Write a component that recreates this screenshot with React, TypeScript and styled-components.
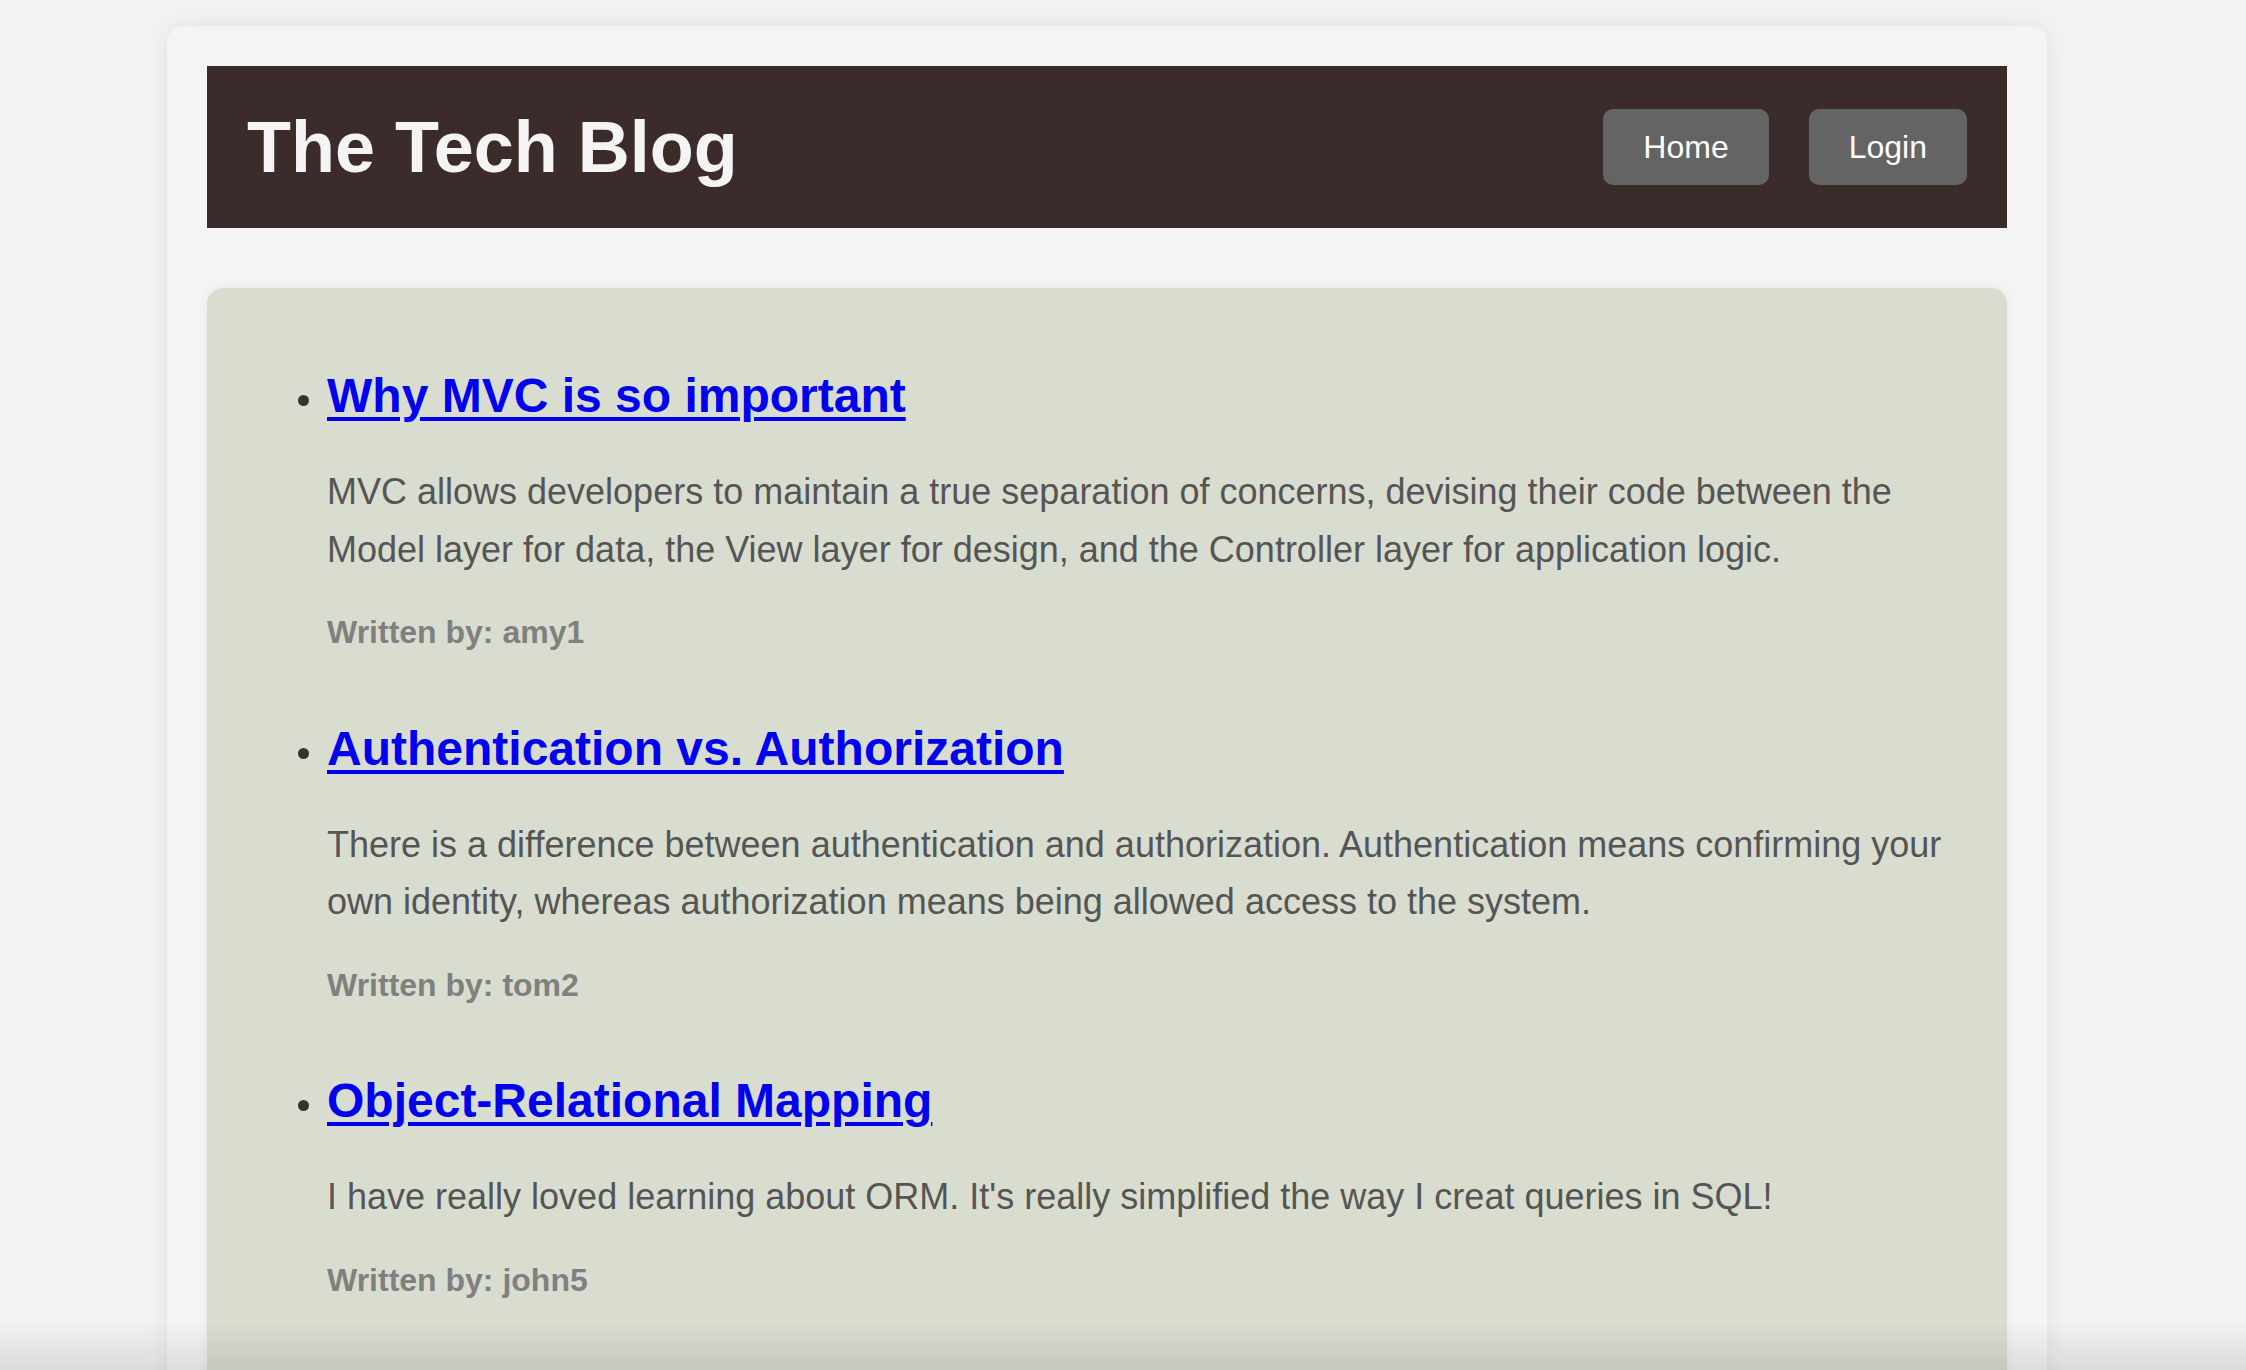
import React from "react";
import styled, { createGlobalStyle } from "styled-components";

const GlobalStyle = createGlobalStyle`
  html, body {
    margin: 0;
    padding: 0;
    background: #f2f2f2;
    font-family: "Liberation Sans", Arial, Helvetica, sans-serif;
    overflow: hidden;
  }
  #root { min-height: 1370px; }
`;

const Page = styled.div`
  padding: 26px 0 0 167px;
`;

const Container = styled.main`
  width: 1880px;
  box-sizing: border-box;
  padding: 40px;
  background: #f4f4f4;
  border-radius: 16px;
  box-shadow: 0 0 22px rgba(0, 0, 0, 0.07);
`;

const Header = styled.header`
  display: flex;
  align-items: center;
  justify-content: space-between;
  padding: 40px;
  background: #3b2c2b;
`;

const Title = styled.h1`
  margin: 0;
  font-size: 72px;
  font-weight: 700;
  line-height: 82px;
  color: #f4f4f4;
`;

const Nav = styled.nav`
  display: flex;
  gap: 40px;
`;

const NavButton = styled.a`
  display: block;
  padding: 20px 40px;
  font-size: 32px;
  line-height: 1.15;
  color: #ffffff;
  background: #646464;
  border-radius: 10px;
  text-decoration: none;
  cursor: pointer;
`;

const Card = styled.section`
  margin-top: 60px;
  padding: 80px 40px 200px;
  background: #d9ddd0;
  border-radius: 16px;
  box-shadow: 0 0 12px rgba(0, 0, 0, 0.05);
`;

const PostList = styled.ul`
  margin: 0;
  padding-left: 80px;
  list-style: disc;
  color: #333333;
  font-size: 36px;
`;

const PostItem = styled.li`
  margin-bottom: 62px;
`;

const PostTitle = styled.h2`
  margin: 0 0 40px;
  font-size: 48px;
  line-height: 1.15;
  font-weight: 700;

  a {
    color: #0000ee;
    text-decoration: underline;
    text-decoration-thickness: 4px;
    text-underline-offset: 5px;
  }
`;

const PostBody = styled.p`
  margin: 0 0 29px;
  font-size: 36px;
  line-height: 1.6;
  color: #555555;
`;

const Author = styled.p`
  margin: 0;
  font-size: 32px;
  line-height: 1.6;
  font-weight: 700;
  color: #808080;
`;

const BottomShade = styled.div`
  position: fixed;
  left: 0;
  right: 0;
  bottom: 0;
  height: 48px;
  pointer-events: none;
  background: linear-gradient(to bottom, rgba(0, 0, 0, 0), rgba(0, 0, 0, 0.09));
`;

const posts = [
  {
    title: "Why MVC is so important",
    body:
      "MVC allows developers to maintain a true separation of concerns, devising their code between the Model layer for data, the View layer for design, and the Controller layer for application logic.",
    author: "amy1",
  },
  {
    title: "Authentication vs. Authorization",
    body:
      "There is a difference between authentication and authorization. Authentication means confirming your own identity, whereas authorization means being allowed access to the system.",
    author: "tom2",
  },
  {
    title: "Object-Relational Mapping",
    body:
      "I have really loved learning about ORM. It's really simplified the way I creat queries in SQL!",
    author: "john5",
  },
];

export default function App() {
  return (
    <>
      <GlobalStyle />
      <Page>
        <Container>
          <Header>
            <Title>The Tech Blog</Title>
            <Nav>
              <NavButton href="#">Home</NavButton>
              <NavButton href="#">Login</NavButton>
            </Nav>
          </Header>
          <Card>
            <PostList>
              {posts.map((p) => (
                <PostItem key={p.title}>
                  <PostTitle>
                    <a href="#">{p.title}</a>
                  </PostTitle>
                  <PostBody>{p.body}</PostBody>
                  <Author>Written by: {p.author}</Author>
                </PostItem>
              ))}
            </PostList>
          </Card>
        </Container>
      </Page>
      <BottomShade />
    </>
  );
}
